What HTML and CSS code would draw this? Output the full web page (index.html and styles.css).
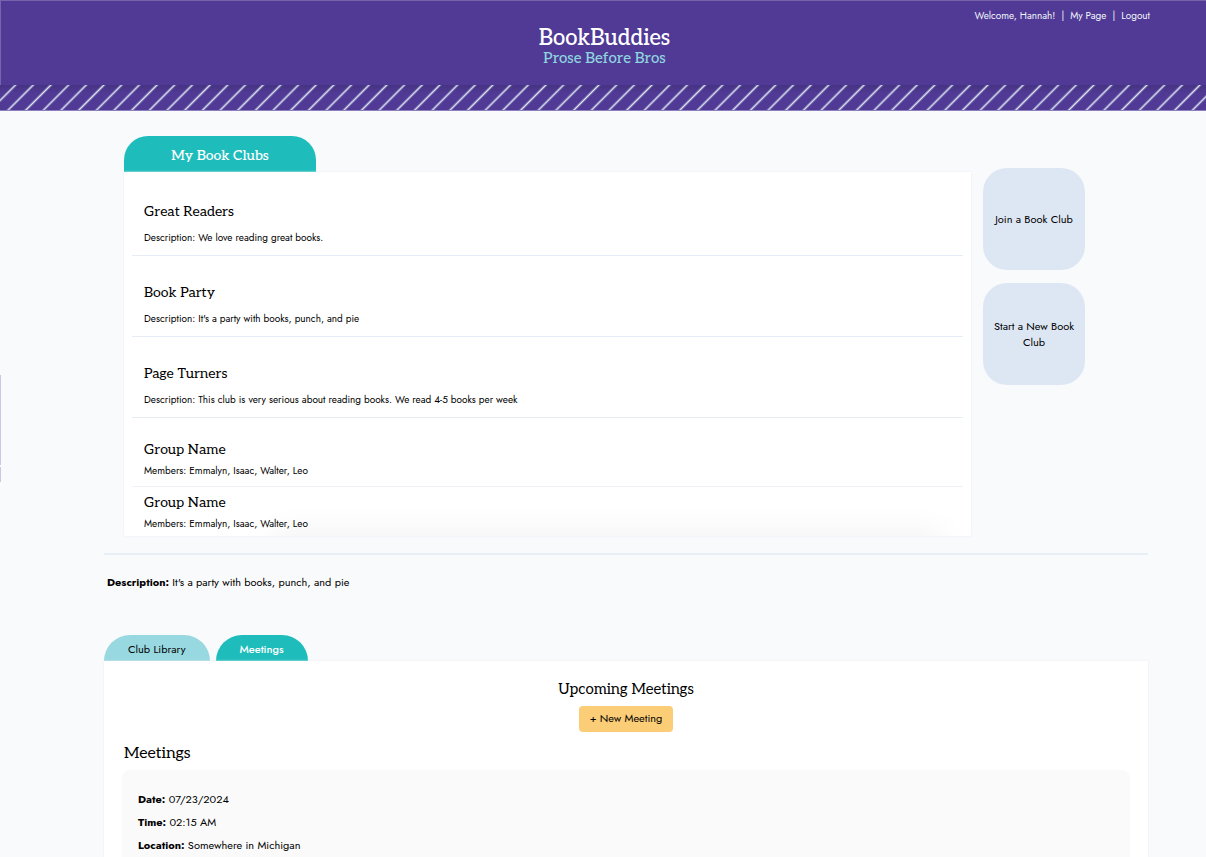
FILE: index.html
```html
<!DOCTYPE html>
<html lang="en">
<head>
<meta charset="utf-8">
<meta name="viewport" content="width=device-width, initial-scale=1">
<title>BookBuddies</title>
<link rel="stylesheet" href="styles.css">
</head>
<body>
<div class="page">
  <header class="header">
    <div class="header-main">
      <nav class="user-nav"><span>Welcome, Hannah!</span><span>|</span><a href="#">My Page</a><span>|</span><a href="#">Logout</a></nav>
      <div class="brand">
        <h1 class="brand-name">BookBuddies</h1>
        <p class="brand-tagline">Prose Before Bros</p>
      </div>
    </div>
    <svg class="stripes" aria-hidden="true">
      <defs>
        <pattern id="stripe" width="12.5" height="12.5" patternUnits="userSpaceOnUse" patternTransform="rotate(45)">
          <rect x="10.2" width="1.6" height="12.5" fill="#dde7f3"/>
        </pattern>
        <linearGradient id="shade" x1="0" y1="0" x2="0" y2="1">
          <stop offset="0" stop-color="#000" stop-opacity=".12"/>
          <stop offset=".35" stop-color="#000" stop-opacity="0"/>
        </linearGradient>
      </defs>
      <rect width="100%" height="100%" fill="url(#shade)"/>
      <rect width="100%" height="100%" fill="url(#stripe)"/>
    </svg>
  </header>

  <div class="drawer-edge" aria-hidden="true"><span class="drawer-body"></span><span class="drawer-foot"></span></div>

  <main class="main">
    <section class="clubs">
      <div class="clubs-column">
        <h2 class="clubs-tab">My Book Clubs</h2>
        <div class="clubs-panel">
          <article class="club"><h3 class="club-title">Great Readers</h3><p class="club-text">Description: We love reading great books.</p></article>
          <article class="club"><h3 class="club-title">Book Party</h3><p class="club-text">Description: It's a party with books, punch, and pie</p></article>
          <article class="club"><h3 class="club-title">Page Turners</h3><p class="club-text">Description: This club is very serious about reading books. We read 4-5 books per week</p></article>
          <div class="groups">
            <article class="group"><h3 class="club-title">Group Name</h3><p class="club-text">Members: Emmalyn, Isaac, Walter, Leo</p></article>
            <article class="group"><h3 class="club-title">Group Name</h3><p class="club-text">Members: Emmalyn, Isaac, Walter, Leo</p></article>
          </div>
        </div>
      </div>
      <div class="actions">
        <button type="button" class="action">Join a Book Club</button>
        <button type="button" class="action">Start a New Book Club</button>
      </div>
    </section>

    <hr class="divider">
    <p class="description"><strong>Description:</strong> It's a party with books, punch, and pie</p>

    <section class="detail">
      <div class="tabs">
        <button type="button" class="tab">Club Library</button>
        <button type="button" class="tab tab-active">Meetings</button>
      </div>
      <div class="detail-panel">
        <h2 class="upcoming">Upcoming Meetings</h2>
        <button type="button" class="new-meeting">+ New Meeting</button>
        <h2 class="meetings-title">Meetings</h2>
        <article class="meeting">
          <p class="meeting-row"><strong>Date:</strong> 07/23/2024</p>
          <p class="meeting-row"><strong>Time:</strong> 02:15 AM</p>
          <p class="meeting-row"><strong>Location:</strong> Somewhere in Michigan</p>
        </article>
      </div>
    </section>
  </main>
</div>
</body>
</html>
```
FILE: styles.css
```css
* { box-sizing: border-box; }

body {
  margin: 0;
  background: #f9fafc;
  color: #000;
  font-family: Jost, Lato, sans-serif;
  font-size: 11px;
  line-height: 16px;
}

h1, h2, h3, p { margin: 0; }

h1, h2, h3, .brand-tagline {
  font-family: Aleo, "DejaVu Serif", serif;
  font-weight: 400;
}

button { font: inherit; color: inherit; border: 0; padding: 0; cursor: pointer; }

.page { position: relative; min-height: 100vh; display: flex; flex-direction: column; }

/* Header */
.header {
  background: #503a95;
  border-top: 1px solid #7563ab;
  border-bottom: 1px solid #8c7fbc;
}
.header-main { height: 84px; padding: 7px 56px 0 58px; border-left: 1px solid #7563ab; }
.user-nav { display: flex; justify-content: flex-end; gap: 6px; font-size: 10px; color: #f0f5fb; }
.user-nav a { color: inherit; text-decoration: none; }
.brand { text-align: center; margin-top: 2px; }
.brand-name { color: #fff; font-size: 22px; font-weight: 500; line-height: 24px; }
.brand-tagline { color: #8fd3df; font-size: 15px; font-weight: 500; line-height: 16px; }
.stripes { display: block; width: 100%; height: 25px; }

/* Sliver of the off-canvas drawer */
.drawer-edge { position: absolute; left: 0; top: 375px; width: 1px; display: grid; gap: 2px; }
.drawer-edge span { background: #cfc8e4; }
.drawer-body { height: 90px; }
.drawer-foot { height: 15px; }

.main { flex: 1; display: flex; flex-direction: column; padding: 25px 58px 0 104px; }

/* Club list */
.clubs { display: flex; gap: 12px; margin: 0 63px 0 20px; }
.clubs-column { flex: 1; }
.clubs-tab {
  width: 192px;
  padding-top: 4px;
  background: #1ebdbc;
  color: #fff;
  border-radius: 24px 24px 0 0;
  text-align: center;
  font-size: 14px;
  font-weight: 500;
  line-height: 32px;
}
.clubs-panel {
  position: relative;
  overflow: hidden;
  padding: 3px 8px 0;
  background: #fff;
  box-shadow: 0 0 2px #e9edf4;
}
.clubs-panel::after {
  content: "";
  position: absolute;
  left: 150px;
  right: 30px;
  top: 100%;
  height: 20px;
  border-radius: 20px;
  box-shadow: 0 0 32px 4px rgba(0, 0, 0, .06);
}
.club { padding: 27px 12px 9px; border-bottom: 1px solid #e6ebf6; }
.club .club-title { margin-bottom: 8px; }
.club-title { font-size: 14px; line-height: 20px; }
.club-text { font-size: 10px; line-height: 16px; }
.groups { padding-top: 16px; }
.group { padding: 6px 12px 4px; }
.group:first-child { padding-bottom: 7px; border-bottom: 1px solid #eef1f8; }
.group .club-title { margin-bottom: 3px; }

.actions { width: 102px; display: flex; flex-direction: column; gap: 13px; padding-top: 32px; }
.action { height: 102px; padding: 0 8px; background: #dde7f3; border-radius: 24px; }

.divider { width: 100%; margin: 17px 0 0; border: 0; border-top: 2px solid #e9eff7; }
.description { margin: 19px 0 0 3px; }

/* Club detail */
.detail { flex: 1; display: flex; flex-direction: column; margin-top: 45px; }
.tabs { display: flex; gap: 6px; }
.tab { height: 26px; padding: 2px 24px 0; background: #98d8e0; border-radius: 26px 26px 0 0; }
.tab-active { background: #1ebdbc; color: #fff; font-weight: 500; }
.detail-panel {
  flex: 1;
  display: flex;
  flex-direction: column;
  align-items: center;
  padding: 16px 18px 0;
  background: #fff;
  box-shadow: 0 0 2px #e9ebee;
}
.upcoming { font-size: 15px; line-height: 24px; }
.new-meeting { height: 26px; margin-top: 5px; padding: 0 11px 2px; background: #fbcd77; border-radius: 4px; }
.meetings-title { align-self: flex-start; margin: 10px 0 4px 2px; font-size: 16px; line-height: 24px; }
.meeting {
  flex: 1;
  width: 100%;
  padding: 21px 16px 0;
  background: #fafafa;
  border-radius: 8px 8px 0 0;
  display: flex;
  flex-direction: column;
  gap: 7px;
}
```
